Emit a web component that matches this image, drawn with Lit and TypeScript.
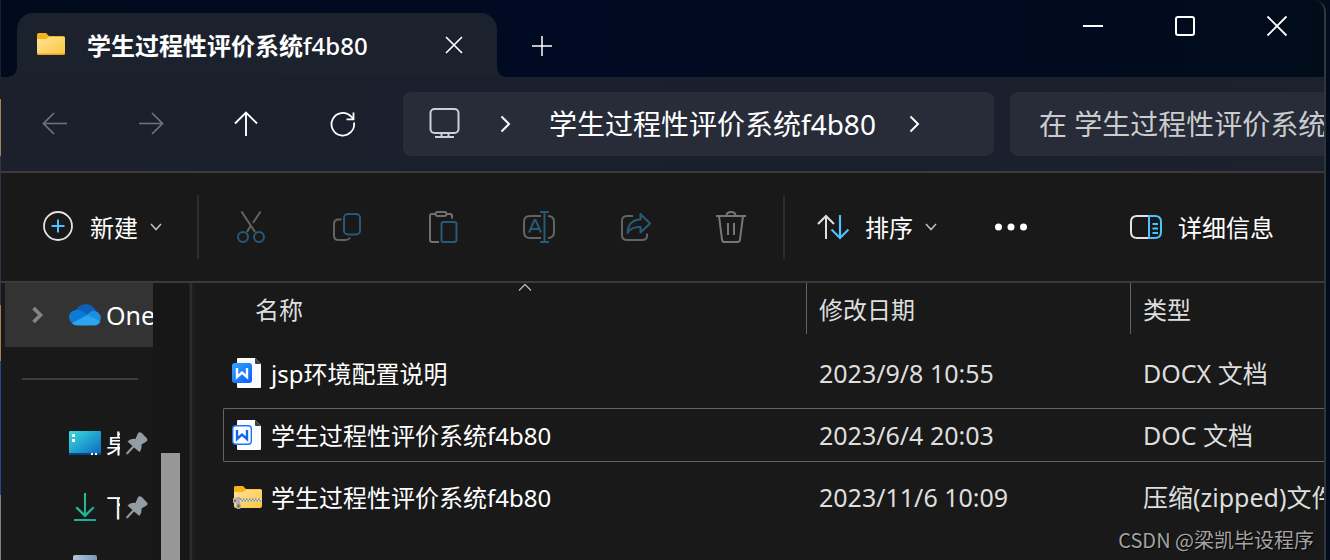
import { LitElement, html, css, svg, nothing } from "lit";
import { customElement, property } from "lit/decorators.js";

const glyphs: Record<string, unknown> = {
  close: svg`<path d="M8 8 24 24M24 8 8 24" stroke-width="1.700"/>`,
  add: svg`<path d="M16 6V26M6 16H26" stroke-width="1.500"/>`,
  minimise: svg`<path d="M6 16H26" stroke-width="2"/>`,
  maximise: svg`<rect x="7" y="7" width="18" height="18" rx="2" stroke-width="2"/>`,
  shut: svg`<path d="M6.500 6.500 25.500 25.500M25.500 6.500 6.500 25.500" stroke-width="1.800"/>`,
  back: svg`<path d="M4.500 15.500H28M15 5 4.500 15.500 15 26" stroke-width="1.700"/>`,
  forward: svg`<path d="M4 15.500H27.500M17 5 27.500 15.500 17 26" stroke-width="1.700"/>`,
  up: svg`<path d="M15 28V5M4 15.500 15 4.500 26 15.500" stroke-width="1.900"/>`,
  refresh: svg`<path d="M27 14.500A11.300 11.300 0 1 1 23.800 8.200L26.500 11M26.500 4.500V11.300H19.500" stroke-width="1.800"/>`,
  monitor: svg`<g stroke="#cdcfd3" stroke-width="2"><rect x="1.500" y="1" width="28" height="24" rx="4"/><path d="M12.500 25V28M19.500 25V28M6 29H25"/></g>`,
  crumb: svg`<path d="M12.500 8.500 20 16 12.500 23.500" stroke-width="2"/>`,
  create: svg`<circle cx="16" cy="15" r="14" stroke="#e3e3e3" stroke-width="1.800"/><path d="M16 8.500V21.500M9.500 15H22.500" stroke="#4cc2ff" stroke-width="2"/>`,
  cut: svg`<path d="M6.500 .5 20 21M25.500 .5 18 12M15.500 15 12 21" stroke="#636363"/><g stroke="#285a76"><circle cx="8" cy="26" r="5"/><circle cx="24" cy="26" r="5"/></g>`,
  copy: svg`<path d="M10.500 8.500H7.500Q3 8.500 3 13V24.500Q3 29 7.500 29H13.500Q18 29 19 26.500" stroke="#636363"/><rect x="13" y="3" width="16" height="20.500" rx="4" stroke="#285a76"/>`,
  paste: svg`<g stroke="#707070"><path d="M8 3H4.500Q3 3 3 5V28.500Q3 31 5 31H12M20 3H23Q25 3 25 5V7.500"/><rect x="8.500" y="1" width="11" height="4" rx="2"/></g><rect x="14.500" y="11" width="15" height="20" rx="2" stroke="#285a76"/>`,
  rename: svg`<path d="M18 5H7Q1 5 1 11V21Q1 27 7 27H18M25 5Q31 5 31 11V21Q31 27 25 27" stroke="#636363"/><path d="M17 1H26M17 31H26M21.500 1V31M6 21.500 11.500 9H12.500L18 21.500M8 18H16" stroke="#285a76"/>`,
  share: svg`<path d="M14 5H8Q3 5 3 10V24Q3 29 8 29H23Q28 29 28 25V22.500" stroke="#636363"/><path d="M21.500 3 31 12.500 21.500 21.500V16Q12 15.500 8.500 22Q9 9 21.500 8.500Z" stroke="#285a76" stroke-linejoin="round"/>`,
  remove: svg`<g stroke="#767676"><path d="M1 5H31M4 5 7 28.500Q7.300 31 9.500 31H22.500Q24.700 31 25 28.500L28 5M11.500 5Q11.500 1 16 1T20.500 5M13 12V24M19 12V24"/></g>`,
  sort: svg`<path d="M9 28V5M1 13 9 5 17 13" stroke="#e0e0e0"/><path d="M23 4V27M14.500 18.500 23 27 31.500 18.500" stroke="#4cc2ff" stroke-width="2.200"/>`,
  more: svg`<g fill="#fff" stroke="none"><circle cx="3.500" cy="16" r="3.500"/><circle cx="16" cy="16" r="3.500"/><circle cx="28.500" cy="16" r="3.500"/></g>`,
  details: svg`<path d="M18 5H7Q1 5 1 11V21Q1 27 7 27H18" stroke="#e3e3e3" stroke-width="2"/><path d="M19 5H25Q31 5 31 11V21Q31 27 25 27H19ZM22.500 13H28M22.500 17.500H28M22.500 22H28" stroke="#4cc2ff" stroke-width="2"/>`,
  tree: svg`<path d="M12.500 9 19.500 16 12.500 23" stroke="#858585" stroke-width="3.600"/>`,
  cloud: svg`<g stroke="none"><path d="M6 14A11 11 0 0 1 27 12L20 20Z" fill="#0f60b8"/><path d="M8 26A8 8 0 0 1 1.500 13.500Q6 9.500 12 11.500L24 19 9 26Z" fill="#0c7bd6"/><path d="M18 16Q24 9 29 13.500T30.500 22Z" fill="#1a90e0"/><path d="M3 24 18.500 16 31.500 22Q29.500 26.500 25 26.500H8Q5 26.500 3 24Z" fill="#2ba5ec"/></g>`,
  desktop: svg`<defs><linearGradient id="d" x2="1" y2="1"><stop stop-color="#3adbe0"/><stop offset="1" stop-color="#0a67be"/></linearGradient></defs><g stroke="none"><rect y="4" width="32" height="24" rx="1" fill="url(#d)"/><path d="M0 26H32V27L31 28H1L0 27Z" fill="#0b4775"/><path d="M3 7H6V10H3ZM3 12H6V15H3ZM22 26H24V28H22ZM26 26H28V28H26Z" fill="#fff"/></g>`,
  download: svg`<defs><linearGradient id="w" x2="1" y2="1"><stop stop-color="#2fc882"/><stop offset="1" stop-color="#11a7a3"/></linearGradient></defs><path d="M15 2H17V22L24 15.500 25.500 17 16 26.500 6.500 17 8 15.500 15 22ZM5 28H27V30H5Z" fill="url(#w)" stroke="none"/>`,
  papers: svg`<defs><linearGradient id="p" x2="1"><stop stop-color="#b5c5d9"/><stop offset="1" stop-color="#7899bd"/></linearGradient></defs><rect x="4" width="24" height="32" rx="2" fill="url(#p)" stroke="none"/>`,
  pin: svg`<path d="M18 6Q20 4.500 21.700 6L27 11.500Q28.300 13.500 26.500 14.500L21.500 17.500Q22 22 19.500 25L14 20.500 8 27 6 27.500 6.500 25.500 12.500 19 7.500 14.500Q10.500 11 15.500 12Z" fill="#949da3" stroke="none"/>`,
  folder: svg`<defs><linearGradient id="f" x2="1" y2="1"><stop stop-color="#ffe398"/><stop offset="1" stop-color="#fbc63c"/></linearGradient></defs><g stroke="none"><path d="M2 6Q2 4 4 4H11L14 7H28Q30 7 30 9V13H2Z" fill="#f6b21b"/><path d="M2 10H11L14 8H29Q30 8 30 9V24Q30 26 28 26H4Q2 26 2 24Z" fill="url(#f)"/><path d="M2 24.500H30Q29.500 26 28 26H4Q2.500 26 2 24.500" fill="#e5a823"/></g>`,
  zip: svg`<defs><linearGradient id="z" x2="1" y2="1"><stop stop-color="#ffe398"/><stop offset="1" stop-color="#fbc63c"/></linearGradient></defs><g stroke="none"><path d="M2 6Q2 5 4 5H11L14 8H28Q30 8 30 10V14H2Z" fill="#f6b21b"/><path d="M2 11H11L14 8.500H29Q30 8.500 30 10V25Q30 27 28 27H4Q2 27 2 25Z" fill="url(#z)"/><path d="M7 17H29.500V21H7Z" fill="#e6dbb8"/></g><path d="M8 18.200H29" stroke="#77706a" stroke-width="1.200" stroke-dasharray="1.500 1.500"/><path d="M9.500 19.800H29" stroke="#77706a" stroke-width="1.200" stroke-dasharray="1.500 1.500"/><g stroke="none"><path d="M1 17H4L5 16H8V22L9 24V26Q9 28 7 28H5.500Q4 28 4 26V22H1Z" fill="#b5b0a8"/><path d="M5.500 23.500H7.500V26.500H5.500ZM2 19H4V20.500H2Z" fill="#696158"/></g>`,
  docx: svg`<defs><linearGradient id="x" x2="1" y2="1"><stop stop-color="#35a6ff"/><stop offset="1" stop-color="#0a5bff"/></linearGradient></defs><g stroke="none"><path d="M6 1H23L29 7V30Q29 31 28 31H6Q5 31 5 30V2Q5 1 6 1Z" fill="#fbfcff"/><path d="M23 1 29 7H24Q23 7 23 6Z" fill="#39404d"/><rect x="0" y="6" width="20" height="20" rx="3" fill="url(#x)"/></g><path d="M5 11V20L10 15.500 15 20V11" stroke="#fff" stroke-width="2.400"/>`,
  doc: svg`<g stroke="none"><path d="M6 1H23L29 7V30Q29 31 28 31H6Q5 31 5 30V2Q5 1 6 1Z" fill="#fbfcff"/><path d="M23 1 29 7H24Q23 7 23 6Z" fill="#39404d"/></g><rect x=".700" y="6.700" width="18.600" height="18.600" rx="3" fill="#fff" stroke="#1b74ff" stroke-width="1.400"/><path d="M5 11V20L10 15.500 15 20V11" stroke="#1463f5" stroke-width="2.400"/>`,
};

@customElement("ui-icon")
export class UiIcon extends LitElement {
  @property() name = "";
  static styles = css`
    :host { display: block; flex: none; width: 32px; height: 32px; }
    .glyph { display: block; width: 100%; height: 100%; }
  `;
  render() {
    return html`<svg class="glyph" viewBox="0 0 32 32" fill="none" stroke="currentColor" stroke-width="2" aria-hidden="true">${glyphs[this.name]}</svg>`;
  }
}

interface FileRow { icon: string; name: string; date: string; type: string; focused?: boolean }

const files: FileRow[] = [
  { icon: "docx", name: "jsp环境配置说明", date: "2023/9/8 10:55", type: "DOCX 文档" },
  { icon: "doc", name: "学生过程性评价系统f4b80", date: "2023/6/4 20:03", type: "DOC 文档", focused: true },
  { icon: "zip", name: "学生过程性评价系统f4b80", date: "2023/11/6 10:09", type: "压缩(zipped)文件" },
];

const tools = [
  ["cut", "剪切"], ["copy", "复制"], ["paste", "粘贴"],
  ["rename", "重命名"], ["share", "共享"], ["remove", "删除"],
];

const places = [["desktop", "桌面"], ["download", "下载"], ["papers", ""]];

const chevron = html`<svg class="chevron" viewBox="0 0 12 8" fill="none" stroke="#bdbdbd" stroke-width="1.600" aria-hidden="true"><path d="M1 1 6 6.500 11 1"/></svg>`;

@customElement("app-root")
export class AppRoot extends LitElement {
  static styles = css`
    :host {
      display: block;
      height: 100vh;
      overflow: hidden;
      position: relative;
      padding-right: 4px;
      box-sizing: border-box;
      background:
        linear-gradient(#1a2130 0 99px, #9c8550 99px 156px, #2d3648 156px 305px, #9c8550 305px 361px, #2b4590 361px 495px, #808080 495px) left / 1px 100% no-repeat,
        #020c1a;
      color: #fff;
      font: 24px/32px "Noto Sans", "Noto Sans CJK SC", sans-serif;
      white-space: nowrap;
    }
    * { box-sizing: border-box; }
    button, input {
      margin: 0; padding: 0; border: 0; background: none;
      color: inherit; font: inherit; outline: 0;
    }
    button { display: flex; align-items: center; justify-content: center; flex: none; }
    .window {
      display: flex; flex-direction: column; height: 100%;
      margin-left: 1px;
      border-right: 2px solid #30343b;
      border-radius: 0 12px 0 0;
      background: #191919;
      overflow: hidden;
    }
    .titlebar {
      display: flex; flex: none; height: 77px; padding-left: 16px;
      background: linear-gradient(90deg, #000a1c, #000a22 40%, #000a20 75%, #010c1b);
    }
    .tab {
      position: relative;
      display: flex; align-items: center;
      width: 480px; height: 64px; margin-top: 13px; padding: 0 27px 0 18px;
      border-radius: 16px 16px 0 0;
      background: #1b212d;
    }
    .tab::before, .tab::after {
      content: ""; position: absolute; bottom: 0; width: 8px; height: 8px;
    }
    .tab::before { right: 100%; background: radial-gradient(circle at 0 0, transparent 7px, #1b212d 8px); }
    .tab::after { left: 100%; background: radial-gradient(circle at 100% 0, transparent 7px, #1b212d 8px); }
    .tab-title { flex: 1; padding: 2px 0 0 20px; font-weight: 700; }
    .tab-title .code { font-weight: 500; }
    .add { width: 90px; height: 64px; margin-top: 14px; }
    .caption { display: flex; margin-left: auto; padding-right: 1px; }
    .caption button { width: 92px; height: 52px; }
    .navbar {
      display: flex; align-items: center; flex: none;
      height: 94px; padding-left: 6px;
      background: linear-gradient(90deg, #1b202c, #1a1f2e 60%, #1c212c);
    }
    .step { width: 96px; height: 64px; }
    .step[disabled] { color: #6f737b; }
    .address {
      display: flex; align-items: center; flex: 1; min-width: 0;
      height: 64px; margin-left: 12px; padding-left: 26px;
      border-radius: 8px; background: #272c38; font-size: 28px;
    }
    .address .arrow { padding: 0 28px; }
    .address .arrow:last-child { padding: 0 22px; }
    .search {
      width: 314px; height: 64px; margin-left: 16px; padding-left: 29px;
      border-radius: 8px 0 0 8px; background: #272c38; font-size: 28px;
    }
    .search::placeholder { color: #cbccce; opacity: 1; }
    .toolbar {
      display: flex; align-items: center; flex: none;
      height: 112px; padding: 0 50px 0 41px;
      border-top: 2px solid #3a3a3d; border-bottom: 2px solid #3a3a3a;
    }
    .labelled { gap: 16px; }
    .label { padding-top: 2px; }
    .chevron { width: 12px; height: 8px; margin-left: -4px; }
    .rule { width: 2px; height: 64px; background: #2c2c2c; flex: none; }
    .rule.first { margin: 0 4px 0 35px; }
    .rule.second { margin: 0 32px 0 4px; }
    .tool { width: 96px; height: 64px; }
    .more { margin-left: 58px; }
    .detail { margin-left: auto; }
    .body { display: flex; flex: 1; min-height: 0; }
    .side { width: 148px; margin-left: 4px; flex: none; overflow: hidden; }
    .place { display: flex; align-items: center; height: 64px; padding: 0 1px 0 64px; font-size: 25px; }
    .place.open { padding: 0 0 0 16px; background: #333; }
    .place.open ui-icon + ui-icon { margin-left: 16px; }
    .place-name { flex: 1; min-width: 0; padding-left: 5px; overflow: hidden; }
    .divider { height: 2px; margin: 31px 15px 31px 17px; border: 0; background: #3d3d3d; }
    .track {
      flex: none; width: 37px; padding: 170px 9px 0 8px;
      background: #171717; border-right: 1px solid #202020;
    }
    .thumb { height: 100%; background: #979797; }
    .splitter { flex: none; width: 5px; border-left: 2px solid #2d2d2d; background: #1e1e1e; }
    .list { display: block; flex: 1; min-width: 0; padding-left: 28px; overflow: hidden; }
    .list thead, .list tbody { display: block; }
    .list tr { display: grid; grid-template-columns: 583px 324px 1fr; }
    .list th, .list td { padding: 0; text-align: left; font-weight: 400; color: #dedede; min-width: 0; }
    .list thead th { height: 51px; padding: 11px 0 0 12px; border-left: 1px solid #636363; }
    .list thead th:first-child { position: relative; margin-left: 20px; border-color: transparent; padding-left: 11px; }
    .sorted { position: absolute; top: 0; left: 50%; width: 14px; height: 9px; margin-left: -7px; }
    .list tbody { padding-top: 12px; }
    .list tbody tr { height: 54px; margin-bottom: 8px; border: 1px solid transparent; border-right: 0; align-items: center; }
    .list tbody tr.focused { border-color: #636363; border-radius: 2px 0 0 2px; }
    .list td { padding-left: 12px; font-size: 25px; overflow: hidden; }
    .list td.file { display: flex; align-items: center; gap: 7px; padding-left: 8px; color: #fff; font-size: 24px; }
    .mark {
      position: absolute; right: 16px; bottom: 4px;
      font: 20px/32px "Noto Sans CJK SC", sans-serif; color: #a3a3a3;
      text-shadow: 1px 1px 1px #000;
    }
  `;

  private row(file: FileRow) {
    return html`<tr class=${file.focused ? "focused" : "plain"}>
      <td class="file"><ui-icon name=${file.icon}></ui-icon><span class="label">${file.name}</span></td>
      <td>${file.date}</td>
      <td>${file.type}</td>
    </tr>`;
  }

  render() {
    return html`
      <div class="window" lang="zh-CN">
        <header class="titlebar">
          <div class="tab">
            <ui-icon name="folder"></ui-icon>
            <span class="tab-title">学生过程性评价系统<span class="code">f4b80</span></span>
            <button aria-label="关闭标签页"><ui-icon name="close"></ui-icon></button>
          </div>
          <button class="add" aria-label="新标签页"><ui-icon name="add"></ui-icon></button>
          <div class="caption">
            <button aria-label="最小化"><ui-icon name="minimise"></ui-icon></button>
            <button aria-label="最大化"><ui-icon name="maximise"></ui-icon></button>
            <button aria-label="关闭"><ui-icon name="shut"></ui-icon></button>
          </div>
        </header>
        <div class="navbar">
          <button class="step" disabled aria-label="后退"><ui-icon name="back"></ui-icon></button>
          <button class="step" disabled aria-label="前进"><ui-icon name="forward"></ui-icon></button>
          <button class="step" aria-label="向上"><ui-icon name="up"></ui-icon></button>
          <button class="step" aria-label="刷新"><ui-icon name="refresh"></ui-icon></button>
          <nav class="address">
            <ui-icon name="monitor"></ui-icon>
            <button class="arrow" aria-label="此电脑"><ui-icon name="crumb"></ui-icon></button>
            <button>学生过程性评价系统f4b80</button>
            <button class="arrow" aria-label="展开"><ui-icon name="crumb"></ui-icon></button>
          </nav>
          <input class="search" type="text" aria-label="搜索" placeholder="在 学生过程性评价系统" />
        </div>
        <div class="toolbar">
          <button class="labelled"><ui-icon name="create"></ui-icon><span class="label">新建</span>${chevron}</button>
          <span class="rule first"></span>
          ${tools.map(([icon, label]) => html`<button class="tool" disabled aria-label=${label}><ui-icon name=${icon}></ui-icon></button>`)}
          <span class="rule second"></span>
          <button class="labelled"><ui-icon name="sort"></ui-icon><span class="label">排序</span>${chevron}</button>
          <button class="more" aria-label="更多"><ui-icon name="more"></ui-icon></button>
          <button class="labelled detail"><ui-icon name="details"></ui-icon><span class="label">详细信息</span></button>
        </div>
        <div class="body">
          <aside class="side">
            <div class="place open">
              <ui-icon name="tree"></ui-icon><ui-icon name="cloud"></ui-icon>
              <span class="place-name">OneDrive</span>
            </div>
            <hr class="divider" />
            ${places.map(([icon, label]) => html`<div class="place">
              <ui-icon name=${icon}></ui-icon>
              <span class="place-name">${label}</span>
              ${label ? html`<ui-icon name="pin"></ui-icon>` : nothing}
            </div>`)}
          </aside>
          <div class="track"><div class="thumb"></div></div>
          <div class="splitter"></div>
          <table class="list">
            <thead>
              <tr>
                <th scope="col">名称<svg class="sorted" viewBox="0 0 14 9" fill="none" stroke="#b5b5b5" stroke-width="1.300" aria-hidden="true"><path d="M1 7.500 7 1.500 13 7.500"/></svg></th>
                <th scope="col">修改日期</th>
                <th scope="col">类型</th>
              </tr>
            </thead>
            <tbody>${files.map((file) => this.row(file))}</tbody>
          </table>
        </div>
      </div>
      <div class="mark" lang="zh-CN">CSDN @梁凯毕设程序</div>
    `;
  }
}
